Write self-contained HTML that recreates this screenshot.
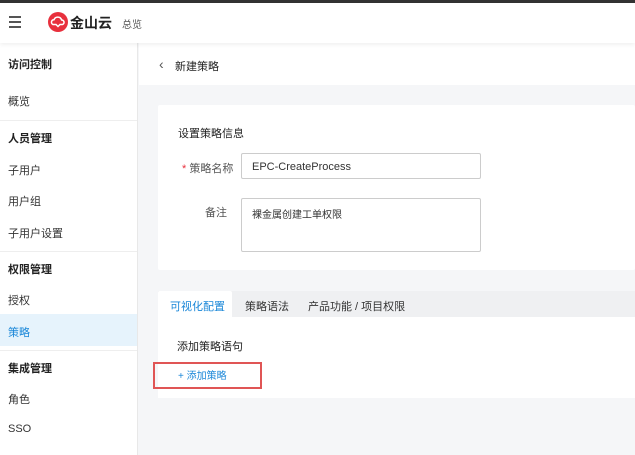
<!DOCTYPE html>
<html><head><meta charset="utf-8"><style>
*{margin:0;padding:0;box-sizing:border-box}
body{width:635px;height:455px;overflow:hidden;background:#f5f6f8;font-family:"Liberation Sans","Noto Sans CJK SC",sans-serif;font-size:11px;color:#333;position:relative}
.a{position:absolute}
.side div.t{position:absolute;left:8px;font-size:11px}
.b{font-weight:bold;color:#222}
</style></head><body>
<div class="a" style="left:0;top:0;width:635px;height:3px;background:#333"></div>
<div class="a" style="left:0;top:3px;width:635px;height:40px;background:#fff;box-shadow:0 2px 4px rgba(0,0,0,.06);z-index:2"></div>
<div class="a" style="left:9px;top:16px;width:12px;height:2px;background:#555;z-index:3;box-shadow:0 5px 0 #555,0 10px 0 #555"></div>
<svg class="a" style="left:48px;top:12px;z-index:3" width="20" height="20" viewBox="0 0 20 20"><circle cx="10" cy="10" r="10" fill="#e8303d"/><path d="M5 12.5a2.5 2.5 0 0 1 1-4.8 4 4 0 0 1 7.6 0.3 2.3 2.3 0 0 1 .8 4.5H12l-2 2-2-2z" fill="none" stroke="#fff" stroke-width="1.5"/></svg>
<div class="a" style="left:70px;top:13px;font-size:14px;font-weight:bold;color:#222;z-index:3">金山云</div>
<div class="a" style="left:122px;top:16px;font-size:10px;color:#555;z-index:3">总览</div>
<div class="a side" style="left:0;top:43px;width:138px;height:412px;background:#fff;border-right:1px solid #e8e8e8">
<div class="t b" style="top:13px">访问控制</div>
<div class="t" style="top:50px">概览</div>
<div class="a" style="left:0;top:77px;width:137px;height:1px;background:#eee"></div>
<div class="t b" style="top:87px">人员管理</div>
<div class="t" style="top:119px">子用户</div>
<div class="t" style="top:150px">用户组</div>
<div class="t" style="top:182px">子用户设置</div>
<div class="a" style="left:0;top:208px;width:137px;height:1px;background:#eee"></div>
<div class="t b" style="top:218px">权限管理</div>
<div class="t" style="top:249px">授权</div>
<div class="a" style="left:0;top:271px;width:137px;height:32px;background:#e6f3fc"></div>
<div class="t" style="top:281px;color:#1a87d8">策略</div>
<div class="a" style="left:0;top:307px;width:137px;height:1px;background:#eee"></div>
<div class="t b" style="top:317px">集成管理</div>
<div class="t" style="top:348px">角色</div>
<div class="t" style="top:380px">SSO</div>
</div>
<div class="a" style="left:139px;top:43px;width:496px;height:42px;background:#fff"></div>
<div class="a" style="left:159px;top:56px;font-size:14px;color:#555">&lsaquo;</div>
<div class="a" style="left:175px;top:58px;font-size:11px;color:#222">新建策略</div>
<div class="a" style="left:158px;top:105px;width:477px;height:165px;background:#fff;border-radius:2px"></div>
<div class="a" style="left:178px;top:125px;color:#222">设置策略信息</div>
<div class="a" style="left:182px;top:160px;color:#555"><span style="color:#e8303d">*</span> 策略名称</div>
<div class="a" style="left:241px;top:153px;width:240px;height:26px;border:1px solid #ccc;border-radius:2px;padding:7px 10px;color:#333">EPC-CreateProcess</div>
<div class="a" style="left:205px;top:204px;color:#555">备注</div>
<div class="a" style="left:241px;top:198px;width:240px;height:54px;border:1px solid #ccc;border-radius:2px;padding:7px 10px;font-size:10px;color:#333">裸金属创建工单权限</div>
<div class="a" style="left:158px;top:291px;width:477px;height:26px;background:#eff0f2"></div>
<div class="a" style="left:158px;top:291px;width:74px;height:27px;background:#fff;border-radius:2px 2px 0 0"></div>
<div class="a" style="left:170px;top:298px;color:#1a87d8">可视化配置</div>
<div class="a" style="left:245px;top:298px;color:#333">策略语法</div>
<div class="a" style="left:308px;top:298px;color:#333">产品功能 / 项目权限</div>
<div class="a" style="left:158px;top:317px;width:477px;height:81px;background:#fff"></div>
<div class="a" style="left:177px;top:338px;color:#222">添加策略语句</div>
<div class="a" style="left:153px;top:362px;width:109px;height:27px;border:2px solid #e05555"></div>
<div class="a" style="left:178px;top:367px;font-size:10px;color:#1a87d8">+ 添加策略</div>
</body></html>
